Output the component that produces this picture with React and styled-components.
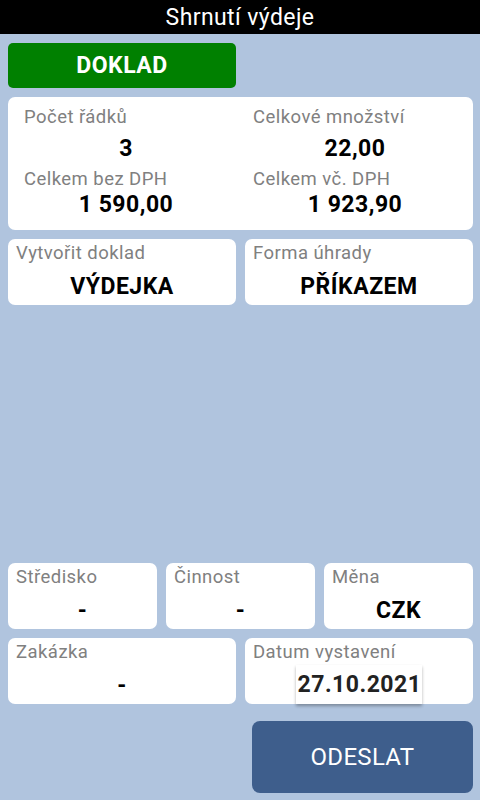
import React from 'react';
import styled, { createGlobalStyle } from 'styled-components';

const GlobalStyle = createGlobalStyle`
  body {
    margin: 0;
    background: #b0c4de;
    font-family: Roboto, 'Liberation Sans', sans-serif;
  }
`;

const Screen = styled.div`
  width: 480px;
  height: 800px;
  display: flex;
  flex-direction: column;
  background: #b0c4de;
`;

const Header = styled.div`
  height: 34px;
  background: #000;
  color: #fff;
  font-size: 23px;
  letter-spacing: 0.4px;
  display: flex;
  align-items: center;
  justify-content: center;
`;

const Content = styled.div`
  flex: 1;
  display: flex;
  flex-direction: column;
  gap: 9px;
  padding: 9px 7px 7px 8px;
`;

const DocButton = styled.div`
  width: 228px;
  height: 45px;
  background: #008000;
  border-radius: 5px;
  color: #fff;
  font-size: 23px;
  font-weight: 700;
  letter-spacing: 0.5px;
  display: flex;
  align-items: center;
  justify-content: center;
`;

const SummaryCard = styled.div`
  background: #fff;
  border-radius: 7px;
  padding: 10px 8px 12px;
  display: grid;
  grid-template-columns: 1fr 1fr;
  column-gap: 9px;
  row-gap: 7px;
`;

const Row = styled.div`
  display: grid;
  grid-template-columns: repeat(${(p) => p.cols}, 1fr);
  gap: 9px;
`;

const Card = styled.div`
  background: #fff;
  border-radius: 7px;
  height: 66px;
  box-sizing: border-box;
  padding: 4px 8px 0;
  display: flex;
  flex-direction: column;
`;

const Cell = styled.div`
  display: flex;
  flex-direction: column;
`;

const Label = styled.div`
  color: #808080;
  font-size: 18.5px;
  line-height: 21px;
  letter-spacing: 0.45px;
  padding-left: ${(p) => (p.inset ? '8px' : '0')};
`;

const Value = styled.div`
  color: #000;
  font-size: 23px;
  font-weight: 700;
  line-height: 26px;
  letter-spacing: 0.5px;
  text-align: center;
  margin-top: ${(p) => (p.gap === undefined ? 10 : p.gap)}px;
`;

const DateWrap = styled.div`
  display: flex;
  justify-content: center;
  margin-top: 2px;
`;

const DateBox = styled.div`
  background: #fff;
  color: #222;
  font-size: 23px;
  font-weight: 700;
  line-height: 26px;
  letter-spacing: 0.5px;
  padding: 7px 1px 6px 2px;
  box-shadow: 0 2px 3px rgba(0, 0, 0, 0.3);
`;

const Spacer = styled.div`
  flex: 1;
`;

const Footer = styled.div`
  display: flex;
  justify-content: flex-end;
  margin-top: 8px;
`;

const SendButton = styled.div`
  width: 221px;
  height: 72px;
  border-radius: 8px;
  background: #3e5e8c;
  color: #fff;
  font-size: 24px;
  letter-spacing: 0.3px;
  display: flex;
  align-items: center;
  justify-content: center;
`;

const summary = [
  { label: 'Počet řádků', value: '3' },
  { label: 'Celkové množství', value: '22,00' },
  { label: 'Celkem bez DPH', value: '1 590,00' },
  { label: 'Celkem vč. DPH', value: '1 923,90' },
];

const Field = ({ label, value }) => (
  <Card>
    <Label>{label}</Label>
    <Value>{value}</Value>
  </Card>
);

export default function App() {
  return (
    <Screen>
      <GlobalStyle />
      <Header>Shrnutí výdeje</Header>
      <Content>
        <DocButton>DOKLAD</DocButton>
        <SummaryCard>
          {summary.map((s, i) => (
            <Cell key={s.label}>
              <Label inset>{s.label}</Label>
              <Value gap={i < 2 ? 8 : 2}>{s.value}</Value>
            </Cell>
          ))}
        </SummaryCard>
        <Row cols={2}>
          <Field label="Vytvořit doklad" value="VÝDEJKA" />
          <Field label="Forma úhrady" value="PŘÍKAZEM" />
        </Row>
        <Spacer />
        <Row cols={3}>
          <Field label="Středisko" value="-" />
          <Field label="Činnost" value="-" />
          <Field label="Měna" value="CZK" />
        </Row>
        <Row cols={2}>
          <Field label="Zakázka" value="-" />
          <Card>
            <Label>Datum vystavení</Label>
            <DateWrap>
              <DateBox>27.10.2021</DateBox>
            </DateWrap>
          </Card>
        </Row>
        <Footer>
          <SendButton>ODESLAT</SendButton>
        </Footer>
      </Content>
    </Screen>
  );
}
